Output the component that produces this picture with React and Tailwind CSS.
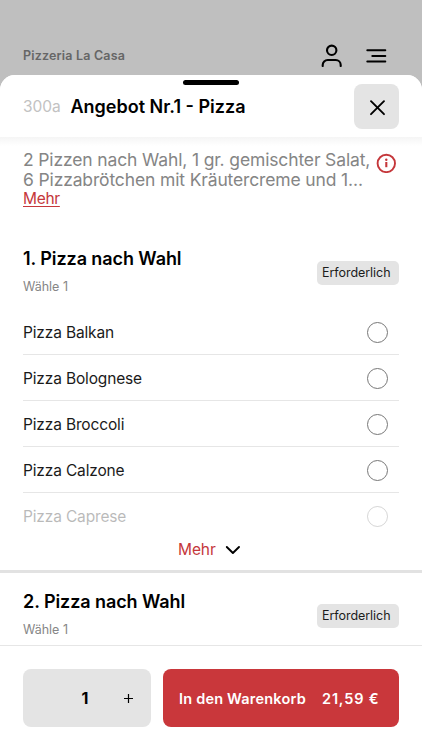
import React from 'react';

const options = [
  { name: 'Pizza Balkan' },
  { name: 'Pizza Bolognese' },
  { name: 'Pizza Broccoli' },
  { name: 'Pizza Calzone' },
  { name: 'Pizza Caprese', faded: true },
];

function TopBar() {
  return (
    <div className="h-[75px] shrink-0 flex items-start justify-between pt-[43px] pl-[23px] pr-[34px]">
      <span className="mt-[3px] text-[12.5px] leading-5 font-semibold tracking-[0.18px] text-[#666]">
        Pizzeria La Casa
      </span>
      <div className="flex items-start text-black">
        <svg className="w-6 h-6" viewBox="0 0 24 24" fill="none" stroke="currentColor" strokeWidth="2.100">
          <circle cx="12.700" cy="7.300" r="4.700" />
          <path d="M3.700 23v-1A5 5 0 0 1 8.700 17h8a5 5 0 0 1 5 5v1" strokeLinecap="round" />
        </svg>
        <svg
          className="w-6 h-6 ml-[21px]"
          viewBox="0 0 24 24"
          fill="none"
          stroke="currentColor"
          strokeWidth="2"
          strokeLinecap="round"
        >
          <path d="M3.300 7.300h18M8.300 12.900h13M3.300 18.600h18" />
        </svg>
      </div>
    </div>
  );
}

function SheetHeader() {
  return (
    <div className="relative z-10 h-[62px] shrink-0 flex items-start justify-between rounded-t-[15px] bg-white pt-[9px] px-[23px]">
      <div className="absolute top-[4.500px] left-[183px] w-14 h-[5.500px] rounded-full bg-black" />
      <div className="flex items-center h-[45px] whitespace-nowrap">
        <span className="w-[47.500px] text-[15.5px] tracking-[-0.05px] text-[#c2c2c2]">300a</span>
        <h1 className="text-[18px] font-semibold tracking-[0px] text-black">Angebot Nr.1 - Pizza</h1>
      </div>
      <button className="w-[45px] h-[45px] flex items-center justify-center rounded-lg bg-[#e4e4e4]">
        <svg
          className="w-6 h-6"
          viewBox="0 0 24 24"
          fill="none"
          stroke="black"
          strokeWidth="1.900"
          strokeLinecap="round"
        >
          <path d="M6 6.200l13 13M19 6.200l-13 13" />
        </svg>
      </button>
      <div className="absolute inset-x-0 top-full h-[9px] bg-gradient-to-b from-[#f5f5f5] to-white" />
    </div>
  );
}

function Description() {
  return (
    <div className="h-[101px] shrink-0 flex px-[23px] pt-[13px]">
      <div className="w-[352px] whitespace-nowrap">
        <p className="text-[17.5px] leading-5 tracking-[-0.14px] text-[#858585]">
          2 Pizzen nach Wahl, 1 gr. gemischter Salat,
          <br />
          6 Pizzabrötchen mit Kräutercreme und 1...
        </p>
        <a className="block mt-[-1px] text-[15.5px] leading-5 tracking-[-0.3px] underline underline-offset-2 text-[#c5373b]">
          Mehr
        </a>
      </div>
      <svg className="w-5 h-5 mt-[3px] ml-[1px] shrink-0" viewBox="0 0 20 20" fill="none" stroke="#c5373b">
        <circle cx="10.300" cy="10.400" r="8.700" strokeWidth="1.900" />
        <path d="M10.300 9v5.200" strokeWidth="2.100" />
        <circle cx="10.300" cy="6.700" r="1.200" fill="#c5373b" stroke="none" />
      </svg>
    </div>
  );
}

function GroupHeader({ title }) {
  return (
    <div className="h-[71px] shrink-0 flex items-start justify-between px-[23px] pt-[9px]">
      <div>
        <h2 className="text-[18px] leading-6 font-semibold tracking-[-0.08px] text-black">{title}</h2>
        <p className="mt-[6px] text-[12.5px] leading-5 text-[#868686]">Wähle 1</p>
      </div>
      <span className="mt-[14px] w-[82px] h-6 pl-[5px] flex items-center rounded-[5px] bg-[#e4e4e4] text-[12.5px] tracking-[-0.05px] text-[#1c1c1c]">
        Erforderlich
      </span>
    </div>
  );
}

function OptionRow({ option }) {
  return (
    <div
      className={
        option.faded
          ? 'h-[46px] flex items-center justify-between pr-[11px] pt-px opacity-30'
          : 'h-[46px] flex items-center justify-between pr-[11px] pt-px border-b border-[#e6e6e6]'
      }
    >
      <span className="mt-px text-[15.5px] tracking-[-0.15px] text-[#1a1a1a]">{option.name}</span>
      <span className="w-[21px] h-[21px] rounded-full border border-[#777]" />
    </div>
  );
}

function Footer() {
  return (
    <div className="h-[105px] shrink-0 flex gap-3 border-t border-[#e6e6e6] bg-white px-[23px] pt-[23px]">
      <div className="w-32 h-[58px] flex items-center rounded-lg bg-[#e4e4e4] text-black">
        <span className="w-10" />
        <span className="w-11 text-center text-base leading-6 font-bold">1</span>
        <button className="w-[43px] flex justify-center">
          <svg className="w-[9px] h-[9px]" viewBox="0 0 9 9" stroke="black" strokeWidth="1.200">
            <path d="M4.500 0v9M0 4.500h9" />
          </svg>
        </button>
      </div>
      <button className="w-[236px] h-[58px] flex items-center rounded-lg bg-[#c9373b] pt-px pl-4 whitespace-nowrap text-[14.5px] font-semibold text-white">
        <span className="w-[143px] text-left tracking-[0.2px]">In den Warenkorb</span>
        <span className="tracking-[0.85px]">21,59 €</span>
      </button>
    </div>
  );
}

export default function App() {
  return (
    <div className="w-[422px] h-[750px] overflow-hidden flex flex-col bg-[#bfbfbf] font-['Inter','Liberation_Sans',sans-serif]">
      <TopBar />
      <div className="flex-1 min-h-0 flex flex-col rounded-t-[15px] bg-white">
        <SheetHeader />
        <Description />
        <GroupHeader title="1. Pizza nach Wahl" />
        <div className="px-[23px] shrink-0">
          {options.map((option) => (
            <OptionRow key={option.name} option={option} />
          ))}
        </div>
        <button className="h-[31px] shrink-0 flex items-start pl-[178px] text-[15.5px] leading-5 text-[#c5373b]">
          <span className="mt-px w-[46px] text-left tracking-[-0.1px]">Mehr</span>
          <svg
            className="w-[18px] h-[18px] mt-[2px]"
            viewBox="0 0 18 18"
            fill="none"
            stroke="black"
            strokeWidth="1.900"
            strokeLinecap="round"
            strokeLinejoin="round"
          >
            <path d="M2.800 6l6.100 6L15 6" />
          </svg>
        </button>
        <div className="h-[3px] shrink-0 bg-[#e2e2e2]" />
        <div className="flex-1 min-h-0 overflow-hidden pt-2">
          <GroupHeader title="2. Pizza nach Wahl" />
        </div>
        <Footer />
      </div>
    </div>
  );
}
